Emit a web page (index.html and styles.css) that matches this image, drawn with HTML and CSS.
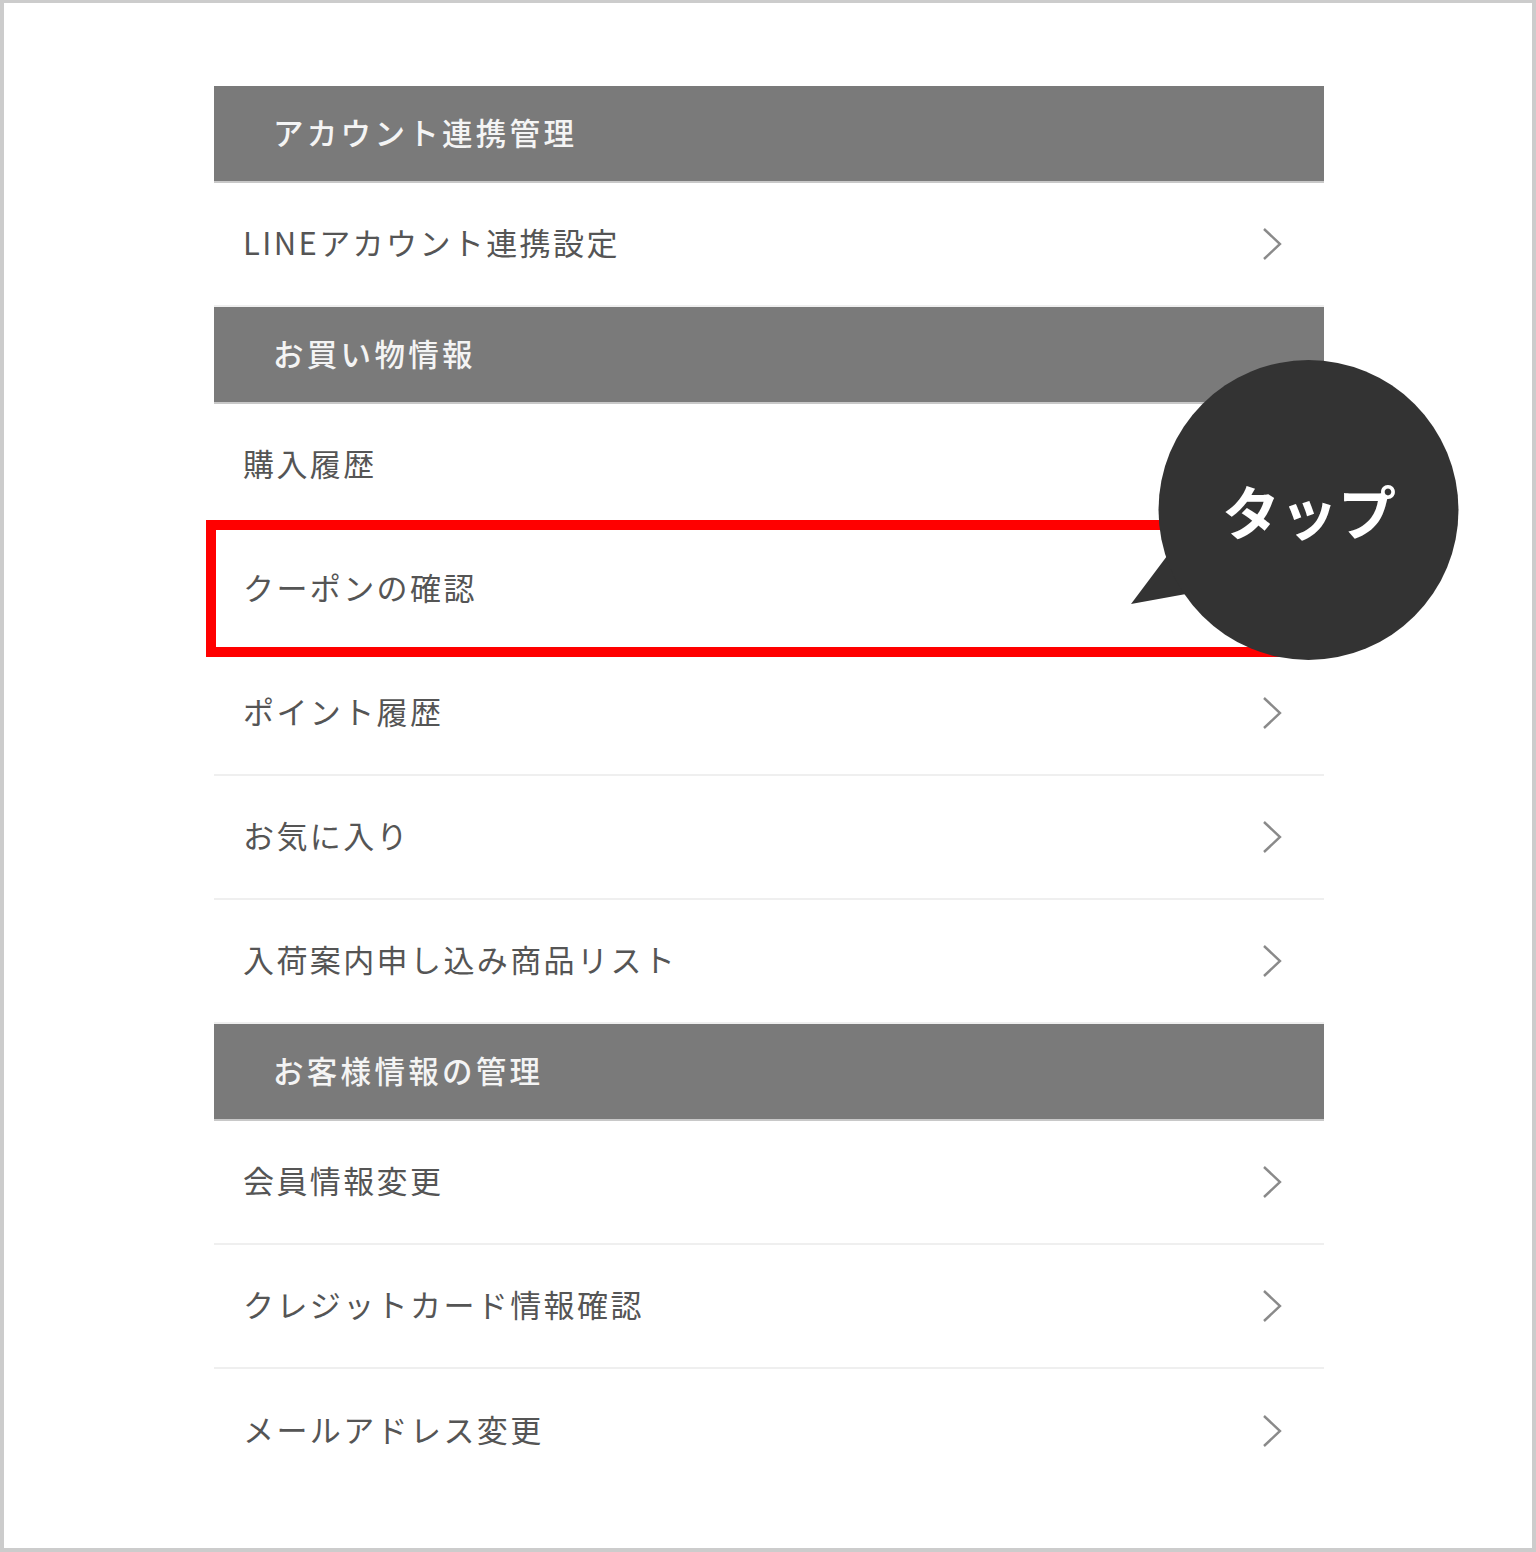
FILE: index.html
```html
<!DOCTYPE html>
<html lang="ja">
<head>
<meta charset="utf-8">
<title>マイページ</title>
<link rel="stylesheet" href="styles.css">
</head>
<body>
<div class="frame">
  <div class="menu">
    <div class="section-head">アカウント連携管理</div>
    <div class="row"><span class="label">LINEアカウント連携設定</span><svg class="chev" viewBox="0 0 20 34"><polyline points="2,2 18,17 2,32"/></svg></div>

    <div class="section-head">お買い物情報</div>
    <div class="row"><span class="label">購入履歴</span><svg class="chev" viewBox="0 0 20 34"><polyline points="2,2 18,17 2,32"/></svg></div>
    <div class="row highlight"><span class="label">クーポンの確認</span><svg class="chev" viewBox="0 0 20 34"><polyline points="2,2 18,17 2,32"/></svg><div class="red-box"></div></div>
    <div class="row"><span class="label">ポイント履歴</span><svg class="chev" viewBox="0 0 20 34"><polyline points="2,2 18,17 2,32"/></svg></div>
    <div class="row"><span class="label">お気に入り</span><svg class="chev" viewBox="0 0 20 34"><polyline points="2,2 18,17 2,32"/></svg></div>
    <div class="row"><span class="label">入荷案内申し込み商品リスト</span><svg class="chev" viewBox="0 0 20 34"><polyline points="2,2 18,17 2,32"/></svg></div>

    <div class="section-head">お客様情報の管理</div>
    <div class="row"><span class="label">会員情報変更</span><svg class="chev" viewBox="0 0 20 34"><polyline points="2,2 18,17 2,32"/></svg></div>
    <div class="row"><span class="label">クレジットカード情報確認</span><svg class="chev" viewBox="0 0 20 34"><polyline points="2,2 18,17 2,32"/></svg></div>
    <div class="row last"><span class="label">メールアドレス変更</span><svg class="chev" viewBox="0 0 20 34"><polyline points="2,2 18,17 2,32"/></svg></div>

    <div class="bubble">
      <svg class="bubble-shape" viewBox="1125 355 335 310">
        <polygon points="1131,604 1167,556 1205,560 1186,594"/>
        <circle cx="1308.5" cy="510" r="150"/>
      </svg>
      <div class="bubble-text">タップ</div>
    </div>
  </div>
</div>
</body>
</html>
```

FILE: styles.css
```css
* { box-sizing: border-box; }
html, body { margin: 0; padding: 0; background: #ffffff; }
body {
  font-family: "Noto Sans CJK JP", "Noto Sans", sans-serif;
}
.frame {
  width: 1536px;
  height: 1552px;
  border: 4px solid #cccccc;
  border-top-width: 3px;
  padding: 83px 0 0 210px;
  background: #ffffff;
}
.menu {
  position: relative;
  width: 1110px;
}
.section-head {
  height: 97px;
  background: #7a7a7a;
  color: #f4f4f4;
  font-size: 30.5px;
  font-weight: 500;
  letter-spacing: 3.3px;
  display: flex;
  align-items: center;
  padding-left: 59px;
  padding-bottom: 4px;
  border-bottom: 2px solid #c8c8c8;
}
.row {
  position: relative;
  height: 124px;
  display: flex;
  align-items: center;
  justify-content: space-between;
  padding: 0 42px 0 29px;
  border-bottom: 2px solid #efefef;
  color: #555555;
  font-size: 31px;
  letter-spacing: 2.4px;
}
.row.last { border-bottom: none; }
.label { padding-bottom: 6px; }
.chev {
  width: 20px;
  height: 34px;
  fill: none;
  stroke: #8a8a8a;
  stroke-width: 2.4;
}
.red-box {
  position: absolute;
  left: -8px;
  right: -4px;
  top: -8px;
  bottom: -7px;
  border: 10px solid #ff0000;
}
.bubble {
  position: absolute;
  left: 911px;
  top: 269px;
  width: 335px;
  height: 310px;
}
.bubble-shape {
  position: absolute;
  left: 0;
  top: 0;
  width: 335px;
  height: 310px;
  fill: #333333;
}
.bubble-text {
  position: absolute;
  left: 34px;
  top: 5px;
  width: 300px;
  height: 300px;
  display: flex;
  align-items: center;
  justify-content: center;
  color: #ffffff;
  font-size: 58px;
  font-weight: 700;
  letter-spacing: 0;
}
```
